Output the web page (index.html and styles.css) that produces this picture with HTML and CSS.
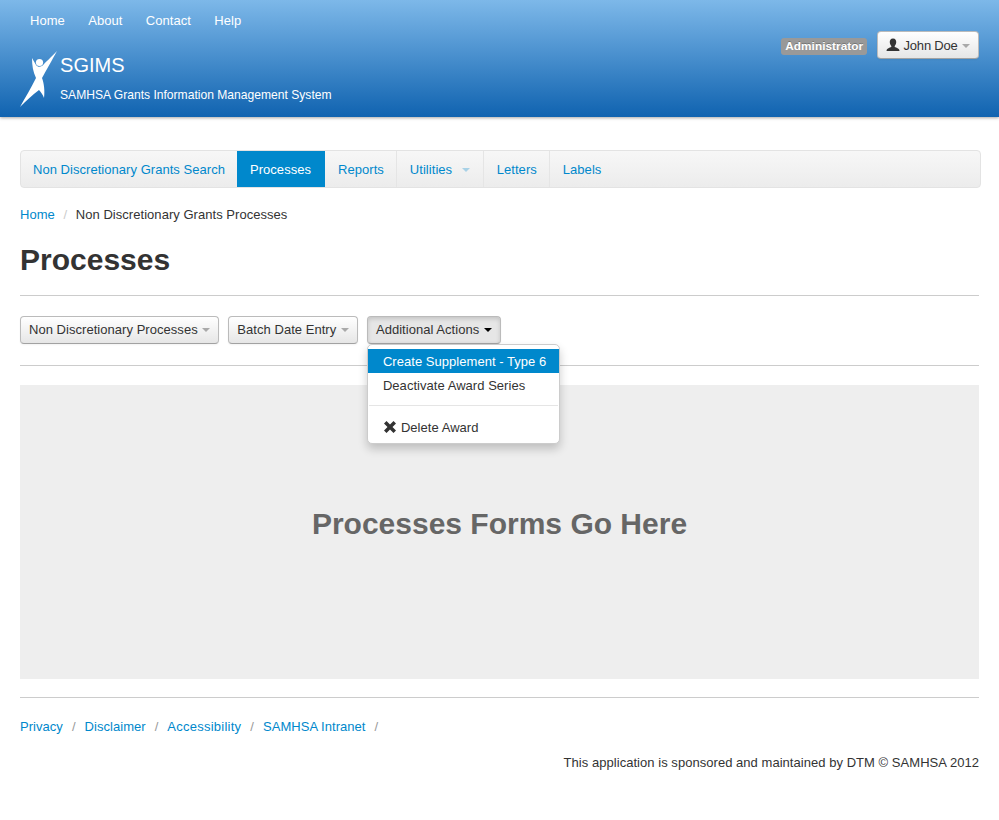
FILE: index.html
```html
<!DOCTYPE html>
<html lang="en">
<head>
    <meta charset="UTF-8">
    <title>SGIMS - Processes</title>
    <link rel="stylesheet" href="styles.css">
</head>
<body>
    <header class="masthead">
        <div class="masthead-left">
            <ul class="top-links">
                <li><a href="#">Home</a></li>
                <li><a href="#">About</a></li>
                <li><a href="#">Contact</a></li>
                <li><a href="#">Help</a></li>
            </ul>
            <div class="brand">
                <svg class="brand-logo" width="38" height="56" viewBox="0 0 38 56">
                    <circle cx="19.5" cy="11.5" r="3.6" fill="#fff"/>
                    <path fill="#fff" d="M37 0 C31 6 27 10 24 13 C22 16 18 17 16 14 L12 7 C12 14 13 21 16 27 C11 37 5 47 0 56 C6 50 12 44 19 39 C21 41 23 44 24 47 C25 40 24 32 22 27 C26 20 32 9 37 0 Z"/>
                </svg>
                <div class="brand-text">
                    <div class="brand-name">SGIMS</div>
                    <div class="brand-sub">SAMHSA Grants Information Management System</div>
                </div>
            </div>
        </div>
        <div class="user-area">
            <span class="role-label">Administrator</span>
            <button class="btn btn-user">
                <svg class="icon-user" width="14" height="14" viewBox="0 0 14 14"><path fill="#333" d="M7 0.5 C9.4 0.5 10.4 2.4 10.2 4.6 C10 6.3 9.4 7.4 8.7 8 L8.7 9 C10.5 9.8 13 10.3 13.4 12 L13.4 13 L0.6 13 L0.6 12 C1 10.3 3.5 9.8 5.3 9 L5.3 8 C4.6 7.4 4 6.3 3.8 4.6 C3.6 2.4 4.6 0.5 7 0.5 Z"/></svg>
                John Doe <span class="caret caret-light"></span>
            </button>
        </div>
    </header>

    <main class="page">
        <nav class="navbar">
            <a href="#">Non Discretionary Grants Search</a>
            <a href="#" class="active">Processes</a>
            <a href="#">Reports</a>
            <a href="#" class="has-caret">Utilities <span class="caret caret-link"></span></a>
            <a href="#">Letters</a>
            <a href="#">Labels</a>
        </nav>

        <div class="breadcrumb">
            <a href="#">Home</a>
            <span class="sep">/</span>
            <span>Non Discretionary Grants Processes</span>
        </div>

        <h1 class="page-title">Processes</h1>

        <div class="toolbar">
            <button class="btn">Non Discretionary Processes <span class="caret caret-light"></span></button>
            <button class="btn">Batch Date Entry <span class="caret caret-light"></span></button>
            <div class="btn-group">
                <button class="btn btn-open">Additional Actions <span class="caret"></span></button>
                <ul class="dropdown">
                    <li class="selected"><a href="#">Create Supplement - Type 6</a></li>
                    <li><a href="#">Deactivate Award Series</a></li>
                    <li class="divider"></li>
                    <li><a href="#"><svg class="icon-x" width="14" height="14" viewBox="0 0 14 14"><path fill="#333" d="M1 3.5 L3.5 1 L7 4.5 L10.5 1 L13 3.5 L9.5 7 L13 10.5 L10.5 13 L7 9.5 L3.5 13 L1 10.5 L4.5 7 Z"/></svg>Delete Award</a></li>
                </ul>
            </div>
        </div>

        <section class="well">
            <h2>Processes Forms Go Here</h2>
        </section>

        <footer class="footer">
            <ul class="footer-links">
                <li><a href="#">Privacy</a></li>
                <li><a href="#">Disclaimer</a></li>
                <li><a href="#" class="wide">Accessibility</a></li>
                <li><a href="#">SAMHSA Intranet</a></li>
            </ul>
            <p class="sponsor">This application is sponsored and maintained by DTM © SAMHSA 2012</p>
        </footer>
    </main>
</body>
</html>
```

FILE: styles.css
```css
* {
    box-sizing: border-box;
}
body {
    margin: 0;
    font-family: "Liberation Sans", Arial, sans-serif;
    font-size: 13px;
    line-height: 20px;
    letter-spacing: 0.04px;
    color: #333;
    background-color: #fff;
}
a {
    color: #0088cc;
    text-decoration: none;
}
ul {
    list-style: none;
    margin: 0;
    padding: 0;
}

/* header */
.masthead {
    height: 117px;
    padding: 0 20px;
    display: flex;
    justify-content: space-between;
    background: linear-gradient(to bottom, #7db8e9, #1063b0);
    box-shadow: 0 1px 3px rgba(0, 0, 0, 0.35);
}
.top-links {
    display: flex;
    gap: 23.4px;
    padding: 11px 0 0 10px;
}
.top-links a {
    color: #fff;
}
.brand {
    display: flex;
    margin-top: 20px;
}
.brand-logo {
    flex: none;
}
.brand-text {
    margin-left: 2px;
    padding-top: 2px;
    color: #fff;
}
.brand-name {
    font-size: 20px;
    line-height: 24px;
}
.brand-sub {
    margin-top: 9px;
    font-size: 12.1px;
    line-height: 18px;
    letter-spacing: 0;
}
.user-area {
    display: flex;
    align-items: flex-start;
    gap: 10px;
    padding-top: 31px;
}
.role-label {
    margin-top: 7px;
    padding: 1px 4px 2px;
    font-size: 11.8px;
    font-weight: bold;
    line-height: 14px;
    color: #fff;
    background-color: #999;
    border-radius: 3px;
    text-shadow: 0 -1px 0 rgba(0, 0, 0, 0.25);
}

/* buttons */
.btn {
    height: 28px;
    padding: 0 8px;
    font-family: inherit;
    font-size: 13px;
    line-height: 20px;
    letter-spacing: inherit;
    color: #333;
    background: linear-gradient(to bottom, #fff, #e6e6e6);
    border: 1px solid #bbb;
    border-bottom-color: #a2a2a2;
    border-radius: 4px;
    box-shadow: inset 0 1px 0 rgba(255, 255, 255, 0.2), 0 1px 2px rgba(0, 0, 0, 0.05);
    white-space: nowrap;
}
.btn-user {
    padding-top: 1px;
    letter-spacing: -0.2px;
}
.btn-open {
    background: #e6e6e6;
    box-shadow: inset 0 2px 4px rgba(0, 0, 0, 0.15), 0 1px 2px rgba(0, 0, 0, 0.05);
}
.icon-user {
    vertical-align: -2px;
}
.caret {
    display: inline-block;
    width: 0;
    height: 0;
    margin-left: 1px;
    vertical-align: 2px;
    border-top: 4px solid #000;
    border-left: 4px solid transparent;
    border-right: 4px solid transparent;
}
.caret-light {
    opacity: 0.3;
}
.caret-link {
    margin-left: 6px;
    border-top-color: #0088cc;
    opacity: 0.3;
}

/* main content */
.page {
    padding: 33px 20px 0;
}
.navbar {
    display: flex;
    height: 38px;
    margin-right: -2px;
    background: linear-gradient(to bottom, #f7f7f7, #ececec);
    border: 1px solid #e3e3e3;
    border-radius: 4px;
}
.navbar a {
    padding: 9px 12px 0 13px;
    border-right: 1px solid #e5e5e5;
}
.navbar a:first-child {
    padding-left: 12px;
    padding-right: 12px;
    border-right: none;
}
.navbar a:last-child {
    border-right: none;
}
.navbar a.has-caret {
    padding-right: 13px;
}
.navbar a.active {
    padding-right: 14px;
    color: #fff;
    background-color: #0088cc;
    border-right: none;
}
.breadcrumb {
    margin-top: 17px;
    height: 19px;
}
.breadcrumb .sep {
    margin: 0 5px;
    color: #ccc;
}
.page-title {
    margin: 16px 0 0;
    font-size: 30px;
    line-height: 40px;
    font-weight: bold;
    letter-spacing: 0;
    color: #333;
}
.toolbar {
    display: flex;
    gap: 9px;
    margin-top: 15px;
    padding: 20px 0 21px;
    border-top: 1px solid #ccc;
    border-bottom: 1px solid #ccc;
    height: 71px;
}
.btn-group {
    position: relative;
}
.dropdown {
    position: absolute;
    z-index: 10;
    top: 28px;
    left: 0;
    width: 193px;
    padding: 4px 0;
    background-color: #fff;
    border: 1px solid #ccc;
    border-radius: 5px;
    box-shadow: 0 5px 10px rgba(0, 0, 0, 0.2);
}
.dropdown a {
    display: block;
    padding: 3px 15px 1px;
    height: 24px;
    color: #333;
    white-space: nowrap;
}
.dropdown .selected a {
    color: #fff;
    background-color: #0088cc;
}
.dropdown .divider {
    height: 1px;
    margin: 8px 1px 9px;
    background-color: #e5e5e5;
}
.icon-x {
    vertical-align: -2px;
    margin-right: 4px;
}
.well {
    display: flex;
    align-items: center;
    justify-content: center;
    height: 294px;
    margin-top: 19px;
    padding-bottom: 16px;
    background-color: #eee;
}
.well h2 {
    margin: 0;
    font-size: 30px;
    line-height: 40px;
    letter-spacing: 0;
    color: #666;
}
.footer {
    margin-top: 18px;
    padding-top: 19px;
    border-top: 1px solid #ccc;
}
.footer-links {
    display: flex;
}
.footer-links li::after {
    content: "/";
    margin: 0 9px;
    color: #999;
}
.footer-links .wide {
    letter-spacing: 0.25px;
}
.sponsor {
    margin: 16px 0 0;
    text-align: right;
}
```
